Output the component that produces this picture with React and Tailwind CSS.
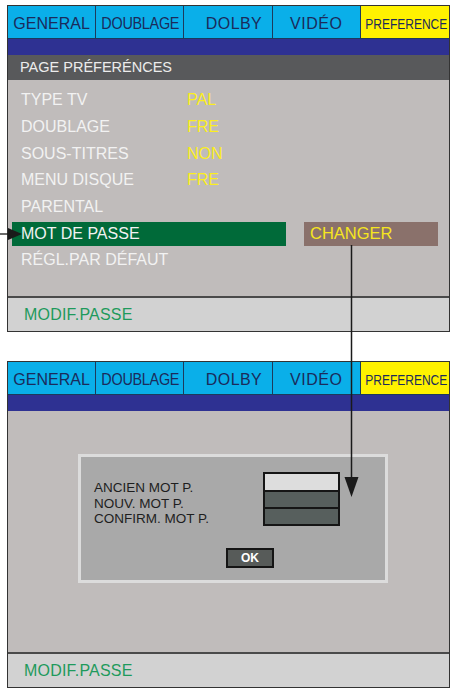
import React from "react";

const FONT = { fontFamily: '"Liberation Sans", Arial, sans-serif' };

function Tabs() {
  return (
    <div className="grid grid-cols-5 h-[33px] border-b border-[#1d3a5c]">
      <div className="bg-[#0aafe9] border-r border-[#1d3a5c] flex items-center justify-center pt-[3px] text-[16px] text-[#1b2b5b] leading-none">GENERAL</div>
      <div className="bg-[#0aafe9] border-r border-[#1d3a5c] flex items-center justify-center pt-[3px] text-[16px] text-[#1b2b5b] leading-none">
        <span className="inline-block scale-x-[0.9] tracking-[-0.3px]">DOUBLAGE</span>
      </div>
      <div className="bg-[#0aafe9] border-r border-[#1d3a5c] flex items-center justify-center pt-[3px] text-[16px] text-[#1b2b5b] leading-none pl-[12px] tracking-[0.4px]">DOLBY</div>
      <div className="bg-[#0aafe9] border-r border-[#1d3a5c] flex items-center justify-center pt-[3px] text-[16px] text-[#1b2b5b] leading-none tracking-[0.5px]">VIDÉO</div>
      <div className="bg-[#fff200] flex items-center justify-center pt-[3px] pl-[3px] text-[15px] text-[#1b2b5b] leading-none">
        <span className="inline-block scale-x-[0.8] whitespace-nowrap">PREFERENCE</span>
      </div>
    </div>
  );
}

function Row({ label, value, children }) {
  return (
    <div className="h-[26.67px] flex items-center text-[16px] leading-none text-[#f2f2f2]">
      {children ? (
        children
      ) : (
        <>
          <span className="w-[166px] pl-[13px] box-content">{label}</span>
          {value && <span className="text-[#fbee1e]">{value}</span>}
        </>
      )}
    </div>
  );
}

function Footer() {
  return (
    <div className="h-[35px] bg-[#d2d2d2] border-t-2 border-[#4a4a4a] flex items-center pl-[16px] text-[16px] tracking-[0.2px] text-[#1e9a5c] leading-none">
      MODIF.PASSE
    </div>
  );
}

export default function App() {
  return (
    <div className="relative w-[451px] h-[690px] bg-white overflow-hidden" style={FONT}>
      <div className="pt-[5px] pl-[7px] w-[450px]">
        {/* Top panel */}
        <div className="w-[443px] border border-[#333]">
          <Tabs />
          <div className="h-[16px] bg-[#2e3192]" />
          <div className="h-[25px] bg-[#58595b] flex items-center pl-[12px] text-[14.5px] text-[#ececec] leading-none">
            PAGE PRÉFERÉNCES
          </div>
          <div className="h-[216px] bg-[#c0bcbb] pt-[7px]">
            <Row label="TYPE TV" value="PAL" />
            <Row label="DOUBLAGE" value="FRE" />
            <Row label="SOUS-TITRES" value="NON" />
            <Row label="MENU DISQUE" value="FRE" />
            <Row label="PARENTAL" />
            <Row>
              <div className="ml-[4px] w-[274px] h-[24px] bg-[#006a39] flex items-center pl-[9px]">MOT DE PASSE</div>
              <div className="ml-[18px] w-[134px] h-[24px] bg-[#8a716b] flex items-center pl-[6px] text-[16.5px] text-[#f6e620]">CHANGER</div>
            </Row>
            <Row label="RÉGL.PAR DÉFAUT" />
          </div>
          <Footer />
        </div>

        {/* Bottom panel */}
        <div className="mt-[29px] w-[443px] border border-[#333]">
          <Tabs />
          <div className="h-[16px] bg-[#2e3192]" />
          <div className="h-[241px] bg-[#c0bcbb] pt-[43px]">
            <div className="ml-[70px] w-[310px] h-[129px] border-[3px] border-[#dcdcdc] bg-[#a9a9a9] pt-[15px]">
              <div className="flex items-start">
                <div className="w-[182px] pl-[13px] box-border mt-[8px] text-[13.5px] leading-[15.5px] text-[#1e1e1e]">
                  <div>ANCIEN MOT P.</div>
                  <div>NOUV. MOT P.</div>
                  <div>CONFIRM. MOT P.</div>
                </div>
                <div className="w-[77px] border-2 border-[#151515] flex flex-col">
                  <div className="h-[16px] bg-[#dddddd]" />
                  <div className="h-[17px] bg-[#575f5d] border-t-2 border-[#151515]" />
                  <div className="h-[17px] bg-[#575f5d] border-t-2 border-[#151515]" />
                </div>
              </div>
              <div className="ml-[145px] mt-[21px] w-[48px] h-[20px] bg-[#575b59] border-2 border-[#151515] flex items-center justify-center text-[12px] font-bold text-white leading-none">
                OK
              </div>
            </div>
          </div>
          <Footer />
        </div>
      </div>

      {/* Overlay arrows */}
      <svg className="absolute left-0 top-0 pointer-events-none" width="451" height="690">
        <line x1="0" y1="234" x2="12" y2="234" stroke="#1a1a1a" strokeWidth="1.3" />
        <polygon points="8,228 22,234 8,240" fill="#1a1a1a" />
        <line x1="351.5" y1="245" x2="351.5" y2="482" stroke="#1a1a1a" strokeWidth="1.5" />
        <polygon points="344.5,477 358.5,477 351.5,497" fill="#1a1a1a" />
      </svg>
    </div>
  );
}
